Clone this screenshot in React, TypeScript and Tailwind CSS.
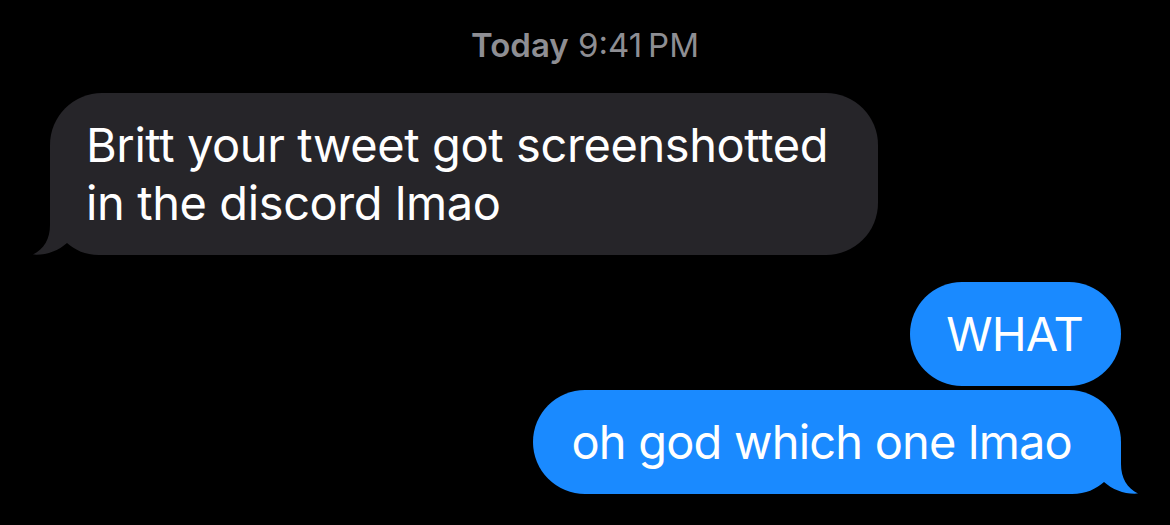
import React from "react";

function LeftTail({ color }: { color: string }) {
  return (
    <svg
      className="absolute left-[-17px] bottom-0 h-[52px] w-[77px]"
      viewBox="0 0 77 52"
      aria-hidden
    >
      <rect x="0" y="0" width="77" height="52" fill="#000" />
      <path
        d="M17,0 L17,22 C17,36 11,46 0,51.6 C13,52.5 25,48 34,40 C42,47 52,52 66,52 L77,52 L77,0 Z"
        fill={color}
      />
    </svg>
  );
}

function RightTail({ color }: { color: string }) {
  return (
    <svg
      className="absolute right-[-17px] bottom-0 h-[52px] w-[77px] -scale-x-100"
      viewBox="0 0 77 52"
      aria-hidden
    >
      <rect x="0" y="0" width="77" height="52" fill="#000" />
      <path
        d="M17,0 L17,22 C17,36 11,46 0,51.6 C13,52.5 25,48 34,40 C42,47 52,52 66,52 L77,52 L77,0 Z"
        fill={color}
      />
    </svg>
  );
}

export default function App() {
  return (
    <div className="h-[525px] w-[1170px] overflow-hidden bg-black font-['Inter','Liberation_Sans',sans-serif] text-white antialiased">
      <div className="pt-[25px] text-center text-[33px] leading-[40px] text-[#8e8e93]">
        <span className="font-semibold">Today</span> 9:41{"\u202F"}PM
      </div>

      <div className="mt-[28px] flex pl-[50px]">
        <div className="relative w-[828px] rounded-[52px] rounded-bl-none bg-[#262529] py-[23px] pl-[36px] pr-[40px] text-[47px] leading-[58px] tracking-[-0.4px]">
          <LeftTail color="#262529" />
          <p className="relative">Britt your tweet got screenshotted in the discord lmao</p>
        </div>
      </div>

      <div className="mt-[27px] flex flex-col items-end gap-[4px] pr-[49px]">
        <div className="rounded-[52px] bg-[#1a8aff] py-[23px] pl-[36px] pr-[38px] text-[47px] leading-[58px] tracking-[-0.8px]">
          WHAT
        </div>
        <div className="relative rounded-[52px] rounded-br-none bg-[#1a8aff] py-[23px] pl-[38px] pr-[49px] text-[47px] leading-[58px] tracking-[-0.8px]">
          <RightTail color="#1a8aff" />
          <p className="relative">oh god which one lmao</p>
        </div>
      </div>
    </div>
  );
}
